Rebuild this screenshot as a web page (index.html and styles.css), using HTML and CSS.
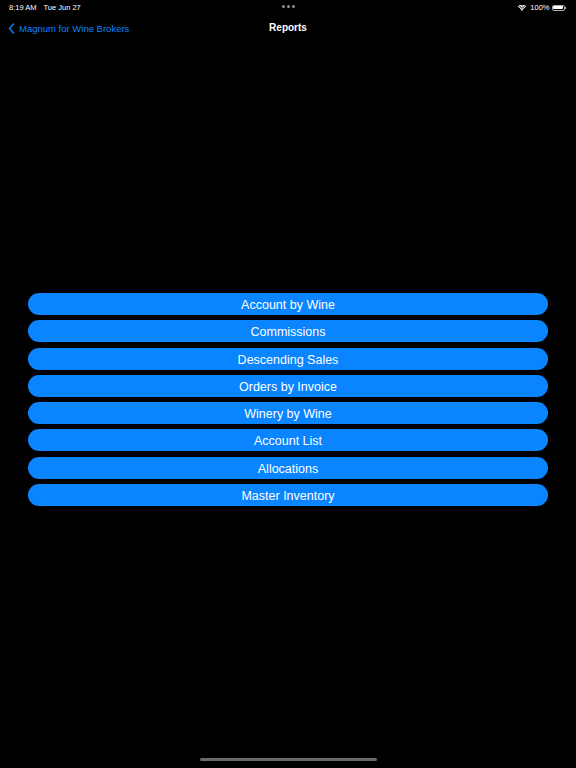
FILE: index.html
```html
<!DOCTYPE html>
<html>
<head>
<meta charset="utf-8">
<link rel="stylesheet" href="styles.css">
</head>
<body>
<div class="screen">
  <div class="status">
    <div class="status-left"><span class="time">8:19 AM</span><span class="date">Tue Jun 27</span></div>
    <div class="dots"><i></i><i></i><i></i></div>
    <div class="status-right">
      <svg class="wifi" width="8" height="6" viewBox="0 0 16 12"><path d="M8 12 L5.6 9.4 A3.4 3.4 0 0 1 10.4 9.4 Z M3.6 7.3 A6.4 6.4 0 0 1 12.4 7.3 L11.2 8.5 A4.7 4.7 0 0 0 4.8 8.5 Z M1.4 5.1 A9.6 9.6 0 0 1 14.6 5.1 L13.4 6.3 A7.9 7.9 0 0 0 2.6 6.3 Z M-0.8 2.9 A12.8 12.8 0 0 1 16.8 2.9 L15.6 4.1 A11.1 11.1 0 0 0 0.4 4.1 Z" fill="#fff"/></svg>
      <span class="pct">100%</span>
      <span class="battery"><span class="fill"></span></span><span class="nub"></span>
    </div>
  </div>
  <div class="nav">
    <div class="back">
      <svg width="7" height="11" viewBox="0 0 7 11"><path d="M5.5 1 L1.5 5.5 L5.5 10" fill="none" stroke="#0a84ff" stroke-width="1.4" stroke-linecap="round" stroke-linejoin="round"/></svg>
      <span>Magnum for Wine Brokers</span>
    </div>
    <div class="title">Reports</div>
  </div>
  <div class="content">
    <div class="list">
      <button class="btn">Account by Wine</button>
      <button class="btn">Commissions</button>
      <button class="btn">Descending Sales</button>
      <button class="btn">Orders by Invoice</button>
      <button class="btn">Winery by Wine</button>
      <button class="btn">Account List</button>
      <button class="btn">Allocations</button>
      <button class="btn">Master Inventory</button>
    </div>
  </div>
  <div class="home"><div class="bar"></div></div>
</div>
</body>
</html>
```

FILE: styles.css
```css
* { box-sizing: border-box; }
html, body { margin: 0; padding: 0; background: #000; }
body { font-family: "Liberation Sans", Arial, sans-serif; color: #fff; }
.screen { width: 576px; height: 768px; display: flex; flex-direction: column; background: #000; }
.status { height: 14px; display: flex; align-items: center; justify-content: space-between; padding: 0 10px 0 9px; font-size: 7.5px; position: relative; }
.status-left { display: flex; gap: 7px; padding-top: 1px; }
.dots { position: absolute; left: 282px; top: 5px; display: flex; gap: 2px; }
.dots i { display: block; width: 3px; height: 3px; border-radius: 50%; background: #8e8e8e; }
.status-right { display: flex; align-items: center; gap: 0; padding-top: 1px; }
.wifi { margin-right: 4px; }
.pct { margin-right: 2px; }
.battery { width: 13px; height: 6px; border: 1px solid #aaa; border-radius: 2px; padding: 0.5px; display: flex; }
.battery .fill { flex: 1; background: #fff; border-radius: 1px; }
.nub { width: 1px; height: 2px; background: #aaa; margin-left: 0.5px; }
.nav { height: 28px; display: flex; align-items: center; position: relative; padding-left: 8px; }
.back { display: flex; align-items: center; gap: 4px; color: #0a84ff; font-size: 9.5px; }
.title { position: absolute; left: 0; right: 0; text-align: center; font-size: 10px; font-weight: bold; top: 8px; pointer-events: none; }
.content { flex: 1; display: flex; flex-direction: column; justify-content: flex-start; padding: 251px 28px 0 28px; }
.list { display: flex; flex-direction: column; gap: 5.3px; }
.btn { height: 22px; border: 0; border-radius: 11px; background: #0a84ff; color: #fff; font-family: "Liberation Sans", Arial, sans-serif; font-size: 12.5px; padding: 2px 0 0 0; margin: 0; }
.home { height: 12px; display: flex; justify-content: center; align-items: flex-start; }
.bar { width: 177px; height: 3px; border-radius: 2px; background: #6a6a6a; margin-top: 2px; }
```
